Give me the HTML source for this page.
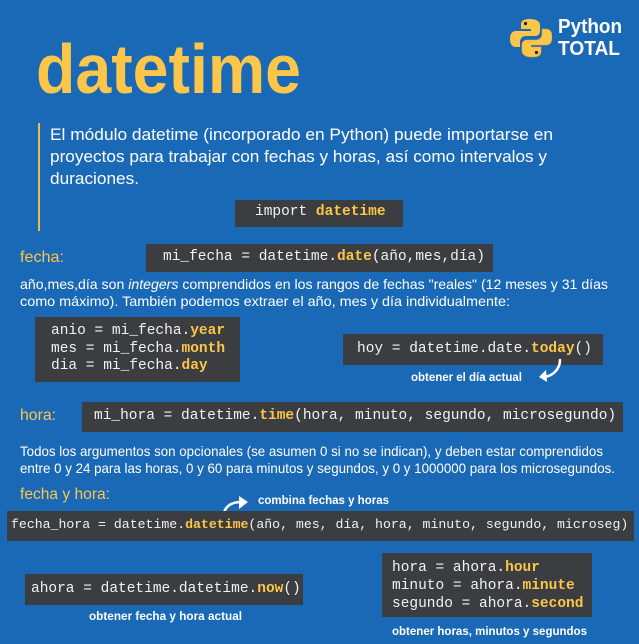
<!DOCTYPE html>
<html><head><meta charset="utf-8"><style>
*{margin:0;padding:0;box-sizing:border-box}
body{width:639px;height:644px;background:#1a69b6;position:relative;overflow:hidden;font-family:"Liberation Sans",sans-serif;color:#fff}
.a{position:absolute;white-space:nowrap}
.box{position:absolute;background:#3b3d40}
.m{font-family:"Liberation Mono","DejaVu Sans Mono",monospace;font-size:14.5px;color:#f2f2f2;white-space:pre;position:absolute}
.y{color:#fcc64a;font-weight:bold}
.lbl{color:#fcc64a;font-size:16px}
.fit{display:inline-block;transform-origin:0 0}
.cap{font-size:12px;font-weight:bold;color:#fff}
</style></head><body>
<div class="a" style="left:36px;top:29px;font-size:70px;font-weight:bold;color:#fcc64a;line-height:80px"><span class="fit" style="width:265px">datetime</span></div>

<svg style="position:absolute;left:510px;top:18px" width="42" height="40" viewBox="0 0 42 40">
<path d="M20 1c-8 0-9 3-9 6v4h10v2H6c-4 0-6 3-6 8s2 8 6 8h4v-5c0-4 3-6 6-6h9c3 0 5-2 5-5V7c0-3-3-6-10-6z" fill="#fcc64a"/>
<path d="M22 39c8 0 9-3 9-6v-4H21v-2h15c4 0 6-3 6-8s-2-8-6-8h-4v5c0 4-3 6-6 6h-9c-3 0-5 2-5 5v6c0 3 3 6 10 6z" fill="#fcc64a" stroke="#e3a93a" stroke-width=".6"/>
<circle cx="15.5" cy="5.5" r="1.6" fill="#222"/><circle cx="26.5" cy="34.5" r="1.6" fill="#222"/>
</svg>
<div class="a" style="left:558px;top:16px;font-size:20px;font-weight:bold;line-height:22px"><span class="fit" style="width:64px">Python</span></div>
<div class="a" style="left:558px;top:38px;font-size:20px;font-weight:bold;line-height:22px"><span class="fit" style="width:62px">TOTAL</span></div>

<div style="position:absolute;left:38px;top:123px;width:2px;height:108px;background:#f0b94a"></div>
<div class="a" style="left:50px;top:124px;font-size:17px;line-height:22px">
<div><span class="fit" style="width:503px">El módulo datetime (incorporado en Python) puede importarse en</span></div>
<div><span class="fit" style="width:497px">proyectos para trabajar con fechas y horas, así como intervalos y</span></div>
<div><span class="fit" style="width:89px">duraciones.</span></div>
</div>

<div class="box" style="left:235px;top:200px;width:168px;height:27px"></div>
<div class="m" style="left:255px;top:204px">import <span class="y">datetime</span></div>

<div class="a lbl" style="left:20px;top:249px"><span class="fit" style="width:44px">fecha:</span></div>
<div class="box" style="left:146px;top:244px;width:347px;height:28px"></div>
<div class="m" style="left:163px;top:249px">mi_fecha = datetime.<span class="y">date</span>(año,mes,día)</div>

<div class="a" style="left:20px;top:276px;font-size:14px;line-height:17px">
<div><span class="fit" style="width:588px">año,mes,día son <i>integers</i> comprendidos en los rangos de fechas "reales" (12 meses y 31 días</span></div>
<div><span class="fit" style="width:490px">como máximo). También podemos extraer el año, mes y día individualmente:</span></div>
</div>

<div class="box" style="left:35px;top:317px;width:205px;height:65px"></div>
<div class="m" style="left:51px;top:323px;line-height:17.5px">anio = mi_fecha.<span class="y">year</span>
mes = mi_fecha.<span class="y">month</span>
dia = mi_fecha.<span class="y">day</span></div>

<div class="box" style="left:343px;top:334px;width:260px;height:31px"></div>
<div class="m" style="left:357px;top:341px">hoy = datetime.date.<span class="y">today</span>()</div>
<div class="a cap" style="left:411px;top:370px"><span class="fit" style="width:111px">obtener el día actual</span></div>
<svg style="position:absolute;left:536px;top:358px" width="28" height="26" viewBox="0 0 28 26"><path d="M24 2c0 9-7 16-16 17" fill="none" stroke="#fff" stroke-width="2.6" stroke-linecap="round"/><path d="M10 12L3 19l8 5z" fill="#fff"/></svg>

<div class="a lbl" style="left:20px;top:407px"><span class="fit" style="width:36px">hora:</span></div>
<div class="box" style="left:82px;top:402px;width:541px;height:30px"></div>
<div class="m" style="left:94px;top:408px">mi_hora = datetime.<span class="y">time</span>(hora, minuto, segundo, microsegundo)</div>

<div class="a" style="left:20px;top:443px;font-size:14px;line-height:16.5px">
<div><span class="fit" style="width:583px">Todos los argumentos son opcionales (se asumen 0 si no se indican), y deben estar comprendidos</span></div>
<div><span class="fit" style="width:595px">entre 0 y 24 para las horas, 0 y 60 para minutos y segundos, y 0 y 1000000 para los microsegundos.</span></div>
</div>

<div class="a lbl" style="left:20px;top:486px"><span class="fit" style="width:90px">fecha y hora:</span></div>
<svg style="position:absolute;left:220px;top:494px" width="32" height="22" viewBox="0 0 32 22"><path d="M4 21c0-8 7-13 17-13" fill="none" stroke="#fff" stroke-width="2.6" stroke-linecap="round"/><path d="M19 2l9 6-9 7z" fill="#fff"/></svg>
<div class="a cap" style="left:258px;top:493px"><span class="fit" style="width:131px">combina fechas y horas</span></div>
<div class="box" style="left:7px;top:511px;width:627px;height:30px"></div>
<div class="m" style="left:11px;top:517px;font-size:13.2px">fecha_hora = datetime.<span class="y">datetime</span>(año, mes, día, hora, minuto, segundo, microseg)</div>

<div class="box" style="left:25px;top:574px;width:278px;height:31px"></div>
<div class="m" style="left:31px;top:581px">ahora = datetime.datetime.<span class="y">now</span>()</div>
<div class="a cap" style="left:89px;top:609px"><span class="fit" style="width:153px">obtener fecha y hora actual</span></div>

<div class="box" style="left:382px;top:553px;width:210px;height:64px"></div>
<div class="m" style="left:392px;top:559px;line-height:18px">hora = ahora.<span class="y">hour</span>
minuto = ahora.<span class="y">minute</span>
segundo = ahora.<span class="y">second</span></div>
<div class="a cap" style="left:392px;top:624px"><span class="fit" style="width:195px">obtener horas, minutos y segundos</span></div>

<script>
document.querySelectorAll('.fit').forEach(function(e){var w=parseFloat(e.style.width);e.style.width='auto';var r=e.getBoundingClientRect().width;if(r>0)e.style.transform='scaleX('+(w/r)+')';});
</script>
</body></html>
